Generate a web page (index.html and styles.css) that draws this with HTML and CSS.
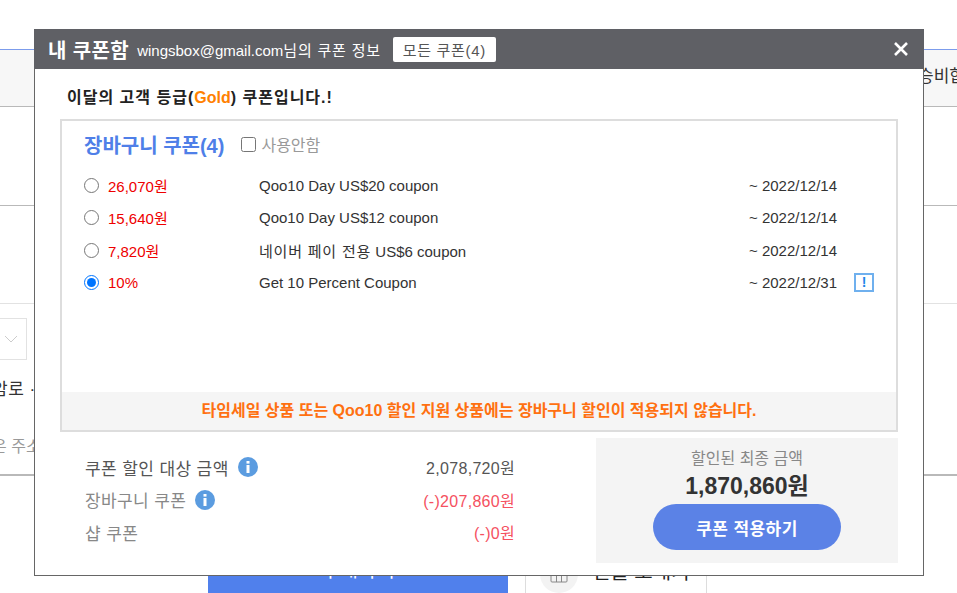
FILE: index.html
```html
<!DOCTYPE html>
<html lang="ko">
<head>
    <meta charset="UTF-8">
    <title>내 쿠폰함</title>
    <link rel="stylesheet" href="styles.css">
</head>
<body>
    <div class="page">
        <div class="tab-bar"><span class="tab-text">승비합</span></div>
        <div class="section-a"></div>
        <div class="section-b"></div>
        <div class="section-c">
            <div class="select-box">
                <svg width="14" height="8" viewBox="0 0 14 8"><path d="M1 1l6 6 6-6" fill="none" stroke="#ccc"/></svg>
            </div>
            <p class="addr-text">암로 ·</p>
            <p class="addr-note">은 주소</p>
        </div>
        <div class="buy-row">
            <div class="buy-btn">구매하기</div>
            <div class="cart-btn">
                <div class="cart-circle">
                    <svg width="18" height="18" viewBox="0 0 18 18"><path d="M1 8v8a1 1 0 0 0 1 1h14a1 1 0 0 0 1-1V8M6.500 8v9M11.500 8v9" fill="none" stroke="#888"/></svg>
                </div>
                <span class="cart-text">선물 보내기</span>
            </div>
        </div>
    </div>

    <div class="modal">
        <div class="modal-head">
            <h1>내 쿠폰함</h1>
            <span class="head-user">wingsbox@gmail.com<span class="ko">님의 쿠폰 정보</span></span>
            <button class="head-btn">모든 쿠폰(4)</button>
            <svg class="head-close" width="16" height="16" viewBox="0 0 16 16"><path d="M2 2l12 12M14 2L2 14" stroke="#fff" stroke-width="2.600"/></svg>
        </div>
        <div class="modal-body">
            <p class="grade">이달의 고객 등급(<b>Gold</b>) 쿠폰입니다.!</p>
            <div class="coupon-box">
                <div class="coupon-title">
                    <h2>장바구니 쿠폰(4)</h2>
                    <label class="no-use"><input type="checkbox">사용안함</label>
                </div>
                <div class="coupon-list">
                    <div class="coupon-row">
                        <label class="amount"><input type="radio" name="cp">26,070원</label>
                        <span>Qoo10 Day US$20 coupon</span>
                        <span>~ 2022/12/14</span>
                    </div>
                    <div class="coupon-row">
                        <label class="amount"><input type="radio" name="cp">15,640원</label>
                        <span>Qoo10 Day US$12 coupon</span>
                        <span>~ 2022/12/14</span>
                    </div>
                    <div class="coupon-row">
                        <label class="amount"><input type="radio" name="cp">7,820원</label>
                        <span><span class="ko">네이버 페이 전용</span> US$6 coupon</span>
                        <span>~ 2022/12/14</span>
                    </div>
                    <div class="coupon-row">
                        <label class="amount"><input type="radio" name="cp" checked>10%</label>
                        <span>Get 10 Percent Coupon</span>
                        <span>~ 2022/12/31</span>
                        <span class="alert-icon">!</span>
                    </div>
                </div>
                <div class="notice">타임세일 상품 또는 Qoo10 할인 지원 상품에는 장바구니 할인이 적용되지 않습니다.</div>
            </div>
            <div class="summary">
                <div class="summary-list">
                    <div class="summary-row dark">
                        <span class="summary-label">쿠폰 할인 대상 금액
                            <svg class="info" width="20" height="20" viewBox="0 0 20 20"><circle cx="10" cy="10" r="10" fill="#5b9ce0"/><rect x="8.500" y="4" width="3" height="2.600" fill="#fff"/><rect x="8.500" y="8" width="3" height="8" fill="#fff"/></svg>
                        </span>
                        <span class="summary-value">2,078,720원</span>
                    </div>
                    <div class="summary-row">
                        <span class="summary-label">장바구니 쿠폰
                            <svg class="info" width="20" height="20" viewBox="0 0 20 20"><circle cx="10" cy="10" r="10" fill="#5b9ce0"/><rect x="8.500" y="4" width="3" height="2.600" fill="#fff"/><rect x="8.500" y="8" width="3" height="8" fill="#fff"/></svg>
                        </span>
                        <span class="summary-value minus">(-)207,860원</span>
                    </div>
                    <div class="summary-row">
                        <span class="summary-label">샵 쿠폰</span>
                        <span class="summary-value minus">(-)0원</span>
                    </div>
                </div>
                <div class="final-box">
                    <p class="final-label">할인된 최종 금액</p>
                    <p class="final-price">1,870,860원</p>
                    <button class="apply-btn">쿠폰 적용하기</button>
                </div>
            </div>
        </div>
    </div>
</body>
</html>
```

FILE: styles.css
```css
* {
    box-sizing: border-box;
}
html, body {
    height: 100%;
    overflow: hidden;
}
body {
    margin: 0;
    background-color: #fff;
    color: #333;
    font-family: "Liberation Sans", "Noto Sans CJK KR", sans-serif;
    font-size: 15px;
}
p, h1, h2 {
    margin: 0;
}
.ko {
    letter-spacing: 0.8px;
}

/* page behind the popup */
.page {
    padding-top: 49px;
}
.tab-bar {
    height: 58px;
    padding-top: 12px;
    overflow: hidden;
    background-color: #f7f7f7;
    border-top: 1px solid #7c9cec;
    border-bottom: 1px solid #b9b9b9;
    white-space: nowrap;
    text-align: right;
}
.tab-text {
    margin-right: -8px;
    font-size: 17px;
}
.section-a {
    height: 99px;
    border-bottom: 1px solid #b9b9b9;
}
.section-b {
    height: 98px;
    border-bottom: 1px solid #e2e2e2;
}
.section-c {
    height: 172px;
    padding-top: 14px;
    border-bottom: 2px solid #b9b9b9;
}
.select-box {
    display: flex;
    align-items: center;
    justify-content: flex-end;
    width: 27px;
    height: 42px;
    padding-right: 8px;
    border: 1px solid #e2e2e2;
    border-left: none;
}
.addr-text {
    margin-top: 15px;
    margin-left: -8px;
    font-size: 17px;
    letter-spacing: 0.5px;
}
.addr-note {
    margin-top: 33px;
    margin-left: -8px;
    font-size: 16px;
    color: #999;
}
.buy-row {
    display: flex;
    gap: 17px;
    margin-top: 67px;
    padding-left: 208px;
}
.buy-btn {
    width: 300px;
    height: 60px;
    padding-bottom: 4px;
    background-color: #5080ec;
    color: #fff;
    font-size: 20px;
    line-height: 55px;
    text-align: center;
}
.cart-btn {
    display: flex;
    align-items: center;
    gap: 14px;
    width: 182px;
    height: 60px;
    padding-left: 14px;
    border-left: 1px solid #ddd;
    border-right: 1px solid #ddd;
}
.cart-circle {
    display: flex;
    align-items: center;
    justify-content: center;
    width: 38px;
    height: 38px;
    margin-top: 1px;
    border-radius: 50%;
    background-color: #f3f3f3;
}
.cart-text {
    margin-bottom: 5px;
    font-size: 20px;
    color: #222;
}

/* popup */
.modal {
    position: absolute;
    left: 34px;
    top: 29px;
    width: 890px;
    height: 547px;
    background-color: #fff;
    border: 1px solid #666;
    border-top: none;
}
.modal-head {
    display: flex;
    align-items: center;
    height: 40px;
    margin: 0 -1px;
    padding: 0 15px 0 14px;
    background-color: #5f6065;
    color: #fff;
}
.modal-head h1 {
    font-size: 20px;
    font-weight: bold;
    letter-spacing: 0.4px;
}
.head-user {
    margin-left: 8px;
    font-size: 15px;
}
.head-btn {
    width: 103px;
    height: 25px;
    margin-left: 12px;
    padding: 0;
    border: none;
    border-radius: 2px;
    background-color: #fff;
    color: #555;
    font-family: inherit;
    font-size: 15px;
    letter-spacing: 0.7px;
}
.head-close {
    margin-left: auto;
}
.modal-body {
    padding: 0 25px;
}
.grade {
    padding: 15px 0 0 7px;
    height: 50px;
    font-size: 16px;
    font-weight: bold;
    letter-spacing: 1px;
    color: #222;
}
.grade b {
    color: #ff8000;
    letter-spacing: 0;
}
.coupon-box {
    display: flex;
    flex-direction: column;
    height: 313px;
    border: 2px solid #ddd;
}
.coupon-title {
    display: flex;
    align-items: center;
    height: 48px;
    padding: 0 0 2px 22px;
}
.coupon-title h2 {
    font-size: 20px;
    font-weight: bold;
    color: #4f7fe8;
}
.no-use {
    display: flex;
    align-items: center;
    margin-left: 17px;
    color: #999;
    font-size: 16px;
}
.no-use input {
    width: 15px;
    height: 15px;
    margin: 0 5px 0 0;
}
.coupon-list {
    flex: 1;
    padding-left: 22px;
}
.coupon-row {
    display: grid;
    grid-template-columns: 175px 490px 105px 20px;
    align-items: center;
    height: 32.500px;
    color: #333;
}
.amount {
    display: flex;
    align-items: center;
    color: #e00;
}
.amount input {
    width: 15px;
    height: 15px;
    margin: 0 9px 0 0;
}
.alert-icon {
    width: 20px;
    height: 19px;
    border: 2px solid #6fb0ee;
    color: #1f86e8;
    font-size: 14px;
    font-weight: bold;
    line-height: 15px;
    text-align: center;
}
.notice {
    height: 38px;
    background-color: #f5f5f5;
    color: #ff7010;
    font-size: 16px;
    font-weight: bold;
    line-height: 37px;
    text-align: center;
}
.summary {
    display: flex;
    justify-content: space-between;
    padding-top: 6px;
}
.summary-list {
    width: 429px;
    margin-left: 25px;
    padding-top: 13px;
}
.summary-row {
    display: flex;
    align-items: center;
    justify-content: space-between;
    height: 32.500px;
    color: #888;
}
.summary-row.dark {
    color: #555;
}
.summary-label {
    display: flex;
    align-items: center;
    gap: 9px;
    font-size: 17px;
    letter-spacing: 0.4px;
}
.summary-value {
    margin-right: -1px;
    font-size: 16px;
    letter-spacing: 0.3px;
}
.minus {
    color: #f5515f;
}
.final-box {
    display: flex;
    flex-direction: column;
    align-items: center;
    width: 302px;
    height: 125px;
    padding-top: 7px;
    background-color: #f4f4f4;
}
.final-label {
    margin-bottom: -2px;
    font-size: 16px;
    color: #888;
}
.final-price {
    font-size: 23px;
    font-weight: bold;
    color: #333;
}
.apply-btn {
    width: 188px;
    height: 46px;
    margin-top: 3px;
    border: none;
    border-radius: 23px;
    background-color: #5b82e6;
    color: #fff;
    font-family: inherit;
    font-size: 17px;
    font-weight: bold;
    letter-spacing: 0.4px;
}
```
